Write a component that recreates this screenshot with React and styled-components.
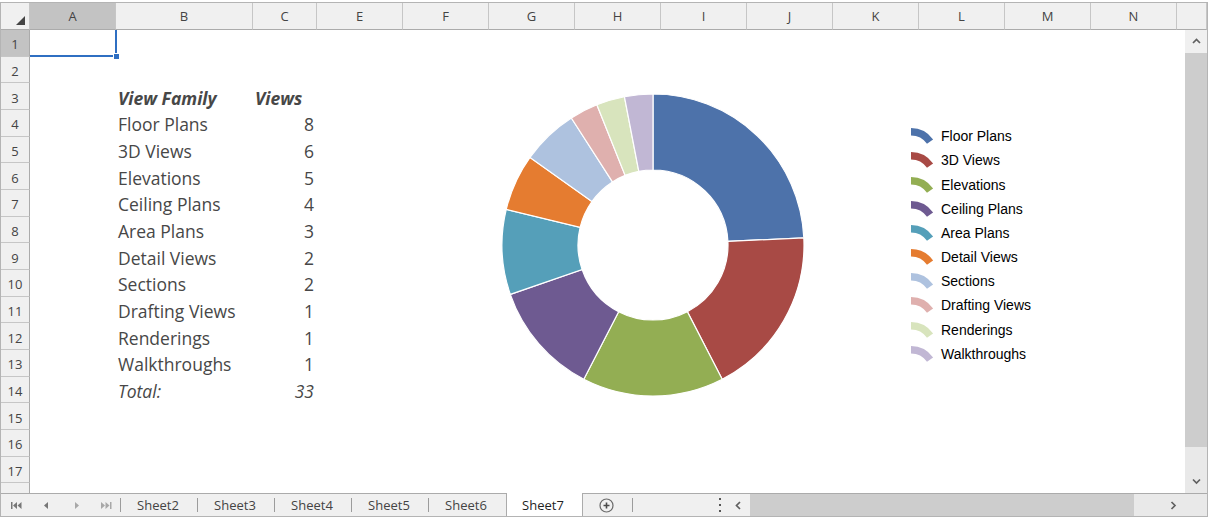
import React from "react";
import styled, { createGlobalStyle } from "styled-components";

const GlobalStyle = createGlobalStyle`
  html, body {
    margin: 0;
    padding: 0;
    background: #fff;
  }
  body {
    font-family: "Open Sans", "Liberation Sans", sans-serif;
  }
`;

const ROW_H = "calc(80px / 3)";

const columns = [
  { name: "A", width: 86, active: true },
  { name: "B", width: 137 },
  { name: "C", width: 64 },
  { name: "E", width: 86 },
  { name: "F", width: 86 },
  { name: "G", width: 86 },
  { name: "H", width: 86 },
  { name: "I", width: 86 },
  { name: "J", width: 86 },
  { name: "K", width: 86 },
  { name: "L", width: 86 },
  { name: "M", width: 86 },
  { name: "N", width: 86 },
  { name: "", width: 30 }
];

const data = [
  { name: "Floor Plans", value: 8, color: "#4d72aa" },
  { name: "3D Views", value: 6, color: "#a84a45" },
  { name: "Elevations", value: 5, color: "#93ae53" },
  { name: "Ceiling Plans", value: 4, color: "#6e5a91" },
  { name: "Area Plans", value: 3, color: "#559fb9" },
  { name: "Detail Views", value: 2, color: "#e57c30" },
  { name: "Sections", value: 2, color: "#aec2df" },
  { name: "Drafting Views", value: 1, color: "#dfb0ae" },
  { name: "Renderings", value: 1, color: "#d8e4bd" },
  { name: "Walkthroughs", value: 1, color: "#c1b7d4" }
];

const tabs = ["Sheet2", "Sheet3", "Sheet4", "Sheet5", "Sheet6", "Sheet7"];
const activeTab = "Sheet7";

const Workbook = styled.div`
  box-sizing: border-box;
  width: 1208px;
  height: 515px;
  margin-top: 2px;
  border: 1px solid #b4b4b4;
  display: flex;
  flex-direction: column;
  background: #fff;
  overflow: hidden;
`;

const HeaderRow = styled.div`
  display: flex;
  height: 27px;
  flex-shrink: 0;
`;

const Corner = styled.div`
  box-sizing: border-box;
  width: 29px;
  background: #f0f0f0;
  border-right: 1px solid #c6c6c6;
  border-bottom: 1px solid #ababab;
  display: flex;
  align-items: flex-end;
  justify-content: flex-end;
  padding: 0 4px 4px 0;
`;

const ColHeader = styled.div`
  box-sizing: border-box;
  width: ${(p) => p.$w}px;
  flex-shrink: 0;
  background: ${(p) => (p.$active ? "#c3c3c3" : "#f0f0f0")};
  border-right: 1px solid #c6c6c6;
  border-bottom: 1px solid #ababab;
  display: flex;
  align-items: center;
  justify-content: center;
  font-size: 13px;
  color: #444;
`;

const Body = styled.div`
  display: flex;
  flex: 1;
  min-height: 0;
`;

const RowHeaders = styled.div`
  width: 29px;
  flex-shrink: 0;
  display: flex;
  flex-direction: column;
  overflow: hidden;
`;

const RowHeader = styled.div`
  box-sizing: border-box;
  height: ${ROW_H};
  flex-shrink: 0;
  background: ${(p) => (p.$active ? "#c3c3c3" : "#f0f0f0")};
  border-right: 1px solid #ababab;
  border-bottom: 1px solid #c6c6c6;
  display: flex;
  align-items: center;
  justify-content: center;
  padding-top: 3px;
  font-size: 13px;
  color: #444;
`;

const Canvas = styled.div`
  position: relative;
  flex: 1;
  overflow: hidden;
  display: grid;
  grid-template-columns: 86px 137px 64px repeat(10, 86px);
  grid-template-rows: repeat(18, ${ROW_H});
`;

const SelectedCell = styled.div`
  position: relative;
  grid-column: 1;
  grid-row: 1;
  box-sizing: border-box;
  margin-right: -1px;
  border-right: 2px solid #2f6fc2;
  border-bottom: 2px solid #2f6fc2;

  &::after {
    content: "";
    position: absolute;
    right: -5px;
    bottom: -5px;
    width: 7px;
    height: 7px;
    background: #2f6fc2;
    border: 1px solid #fff;
    box-sizing: border-box;
  }
`;

const Cell = styled.div`
  grid-row: ${(p) => p.$row};
  grid-column: ${(p) => p.$col};
  display: flex;
  align-items: center;
  justify-content: ${(p) => (p.$right ? "flex-end" : "flex-start")};
  padding: 2px 3px 0 2px;
  font-size: 17.5px;
  color: #474747;
  font-style: ${(p) => (p.$italic ? "italic" : "normal")};
  font-weight: ${(p) => (p.$bold ? 700 : 400)};
  white-space: nowrap;
`;

const ChartObject = styled.div`
  position: absolute;
  left: 470px;
  top: 62px;
  display: flex;
  align-items: center;
`;

const Legend = styled.div`
  display: flex;
  flex-direction: column;
  margin-left: 105px;
`;

const LegendItem = styled.div`
  display: flex;
  align-items: center;
  height: 24.2px;
  font-family: "Liberation Sans", Arial, sans-serif;
  font-size: 14px;
  color: #000;
`;

const LegendMarker = styled.svg`
  width: 23px;
  height: 16px;
  margin-right: 7px;
  flex-shrink: 0;
`;

const VScroll = styled.div`
  width: 22px;
  flex-shrink: 0;
  display: flex;
  flex-direction: column;
  background: #e9e9e9;
`;

const ScrollButton = styled.div`
  width: ${(p) => p.$w || 23}px;
  height: ${(p) => p.$h || 23}px;
  flex-shrink: 0;
  display: flex;
  align-items: center;
  justify-content: center;
  background: ${(p) => p.$bg || "#f0f0f0"};
`;

const Thumb = styled.div`
  flex-shrink: 0;
  background: #cdcdcd;
  width: ${(p) => p.$w || "auto"};
  height: ${(p) => p.$h || "auto"};
`;

const Track = styled.div`
  flex: 1;
  background: #e9e9e9;
`;

const TabBar = styled.div`
  box-sizing: border-box;
  height: 23px;
  flex-shrink: 0;
  display: flex;
  border-top: 1px solid #ababab;
  background: #f0f0f0;
`;

const Nav = styled.div`
  position: relative;
  display: flex;
  width: 120px;
  &::after {
    content: "";
    position: absolute;
    right: 0;
    top: 4px;
    width: 1px;
    height: 14px;
    background: #9c9c9c;
  }
`;

const NavButton = styled.div`
  width: 30px;
  display: flex;
  align-items: center;
  justify-content: center;
  color: ${(p) => (p.$dim ? "#a8a8a8" : "#777")};
`;

const Tab = styled.div`
  position: relative;
  box-sizing: border-box;
  width: 77px;
  flex-shrink: 0;
  height: ${(p) => (p.$active ? "23px" : "22px")};
  margin-top: ${(p) => (p.$active ? "-1px" : "0")};
  display: flex;
  align-items: center;
  justify-content: center;
  padding-right: 3px;
  font-size: 13px;
  color: ${(p) => (p.$active ? "#1f1f1f" : "#444")};
  background: ${(p) => (p.$active ? "#fff" : "transparent")};
  border-left: ${(p) => (p.$active ? "1px solid #ababab" : "none")};
  border-right: ${(p) => (p.$active ? "1px solid #ababab" : "none")};

  &::after {
    content: "";
    display: ${(p) => (p.$sep ? "block" : "none")};
    position: absolute;
    right: 0;
    top: 4px;
    width: 1px;
    height: 14px;
    background: #9c9c9c;
  }
`;

const AddTab = styled(Tab)`
  width: 50px;
`;

const Spacer = styled.div`
  flex: 1;
`;

const Grip = styled.div`
  width: 14px;
  display: flex;
  flex-direction: column;
  align-items: center;
  justify-content: center;
  gap: 4px;

  span {
    width: 2px;
    height: 2px;
    background: #555;
  }
`;

const HScroll = styled.div`
  display: flex;
  width: 480px;
  background: #e9e9e9;
`;

const polar = (cx, cy, rad, deg) => {
  const a = (deg * Math.PI) / 180;
  return [cx + rad * Math.cos(a), cy + rad * Math.sin(a)];
};

const slicePath = (cx, cy, R, r, a0, a1) => {
  const large = a1 - a0 > 180 ? 1 : 0;
  const [x0, y0] = polar(cx, cy, R, a0);
  const [x1, y1] = polar(cx, cy, R, a1);
  const [x2, y2] = polar(cx, cy, r, a1);
  const [x3, y3] = polar(cx, cy, r, a0);
  return `M${x0} ${y0} A${R} ${R} 0 ${large} 1 ${x1} ${y1} L${x2} ${y2} A${r} ${r} 0 ${large} 0 ${x3} ${y3} Z`;
};

const Donut = () => {
  const total = data.reduce((s, d) => s + d.value, 0);
  let angle = -90;
  return (
    <svg width="306" height="306" viewBox="0 0 306 306">
      {data.map((d) => {
        const a0 = angle;
        const a1 = angle + (d.value / total) * 360;
        angle = a1;
        return (
          <path
            key={d.name}
            d={slicePath(153, 153, 151, 75, a0, a1)}
            fill={d.color}
            stroke="#fff"
            strokeWidth="1.2"
          />
        );
      })}
    </svg>
  );
};

const Chevron = ({ dir }) => {
  const paths = {
    up: "M1 5 L4.5 1.5 L8 5",
    down: "M1 1.5 L4.5 5 L8 1.5",
    left: "M5 1 L1.5 4.5 L5 8",
    right: "M1.5 1 L5 4.5 L1.5 8"
  };
  const vertical = dir === "up" || dir === "down";
  return (
    <svg width={vertical ? 9 : 7} height={vertical ? 7 : 9}>
      <path d={paths[dir]} fill="none" stroke="#606060" strokeWidth="1.7" />
    </svg>
  );
};

const NavIcon = ({ kind }) => {
  const shapes = {
    first: (
      <>
        <rect x="0" y="0" width="1.5" height="7" />
        <path d="M6 0 L2 3.5 L6 7Z M10.5 0 L6.5 3.5 L10.5 7Z" />
      </>
    ),
    prev: <path d="M7 0 L3 3.5 L7 7Z" />,
    next: <path d="M4 0 L8 3.5 L4 7Z" />,
    last: (
      <>
        <path d="M0 0 L4 3.5 L0 7Z M4.5 0 L8.5 3.5 L4.5 7Z" />
        <rect x="9" y="0" width="1.5" height="7" />
      </>
    )
  };
  return (
    <svg width="11" height="7" fill="currentColor">
      {shapes[kind]}
    </svg>
  );
};

const App = () => {
  const total = data.reduce((s, d) => s + d.value, 0);
  return (
    <>
      <GlobalStyle />
      <Workbook>
        <HeaderRow>
          <Corner>
            <svg width="9" height="9">
              <path d="M9 0 L9 9 L0 9Z" fill="#444" />
            </svg>
          </Corner>
          {columns.map((c, i) => (
            <ColHeader key={i} $w={c.width} $active={c.active}>
              {c.name}
            </ColHeader>
          ))}
        </HeaderRow>

        <Body>
          <RowHeaders>
            {Array.from({ length: 18 }, (_, i) => (
              <RowHeader key={i} $active={i === 0}>
                {i < 17 ? i + 1 : ""}
              </RowHeader>
            ))}
          </RowHeaders>

          <Canvas>
            <SelectedCell />
            <Cell $row={3} $col={2} $bold $italic>
              View Family
            </Cell>
            <Cell $row={3} $col={3} $bold $italic>
              Views
            </Cell>
            {data.map((d, i) => (
              <React.Fragment key={d.name}>
                <Cell $row={4 + i} $col={2}>
                  {d.name}
                </Cell>
                <Cell $row={4 + i} $col={3} $right>
                  {d.value}
                </Cell>
              </React.Fragment>
            ))}
            <Cell $row={14} $col={2} $italic>
              Total:
            </Cell>
            <Cell $row={14} $col={3} $right $italic>
              {total}
            </Cell>

            <ChartObject>
              <Donut />
              <Legend>
                {data.map((d) => (
                  <LegendItem key={d.name}>
                    <LegendMarker viewBox="0 0 23 16">
                      <path
                        d="M0 0 A27 27 0 0 1 22.1 11.5 L16 15.8 A19.5 19.5 0 0 0 0 7.5 Z"
                        fill={d.color}
                      />
                    </LegendMarker>
                    {d.name}
                  </LegendItem>
                ))}
              </Legend>
            </ChartObject>
          </Canvas>

          <VScroll>
            <ScrollButton $w={22}>
              <Chevron dir="up" />
            </ScrollButton>
            <Thumb $h="394px" />
            <Track />
            <ScrollButton $w={22} $bg="#e9e9e9">
              <Chevron dir="down" />
            </ScrollButton>
          </VScroll>
        </Body>

        <TabBar>
          <Nav>
            <NavButton>
              <NavIcon kind="first" />
            </NavButton>
            <NavButton>
              <NavIcon kind="prev" />
            </NavButton>
            <NavButton $dim>
              <NavIcon kind="next" />
            </NavButton>
            <NavButton $dim>
              <NavIcon kind="last" />
            </NavButton>
          </Nav>
          {tabs.map((t, i) => {
            const isActive = t === activeTab;
            const nextActive = tabs[i + 1] === activeTab;
            return (
              <Tab key={t} $active={isActive} $sep={!isActive && !nextActive}>
                {t}
              </Tab>
            );
          })}
          <AddTab $sep>
            <svg width="15" height="15" viewBox="0 0 15 15">
              <circle cx="7.5" cy="7.5" r="6.5" fill="none" stroke="#6a6a6a" strokeWidth="1.2" />
              <path d="M7.5 4.5 V10.5 M4.5 7.5 H10.5" stroke="#4a4a4a" strokeWidth="1.6" />
            </svg>
          </AddTab>
          <Spacer />
          <Grip>
            <span />
            <span />
            <span />
          </Grip>
          <HScroll>
            <ScrollButton $h={22}>
              <Chevron dir="left" />
            </ScrollButton>
            <Thumb $w="384px" />
            <Track />
            <ScrollButton $h={22} $bg="#e9e9e9">
              <Chevron dir="right" />
            </ScrollButton>
            <ScrollButton $w={22} $h={22} $bg="#e9e9e9" />
          </HScroll>
        </TabBar>
      </Workbook>
    </>
  );
};

export default App;
